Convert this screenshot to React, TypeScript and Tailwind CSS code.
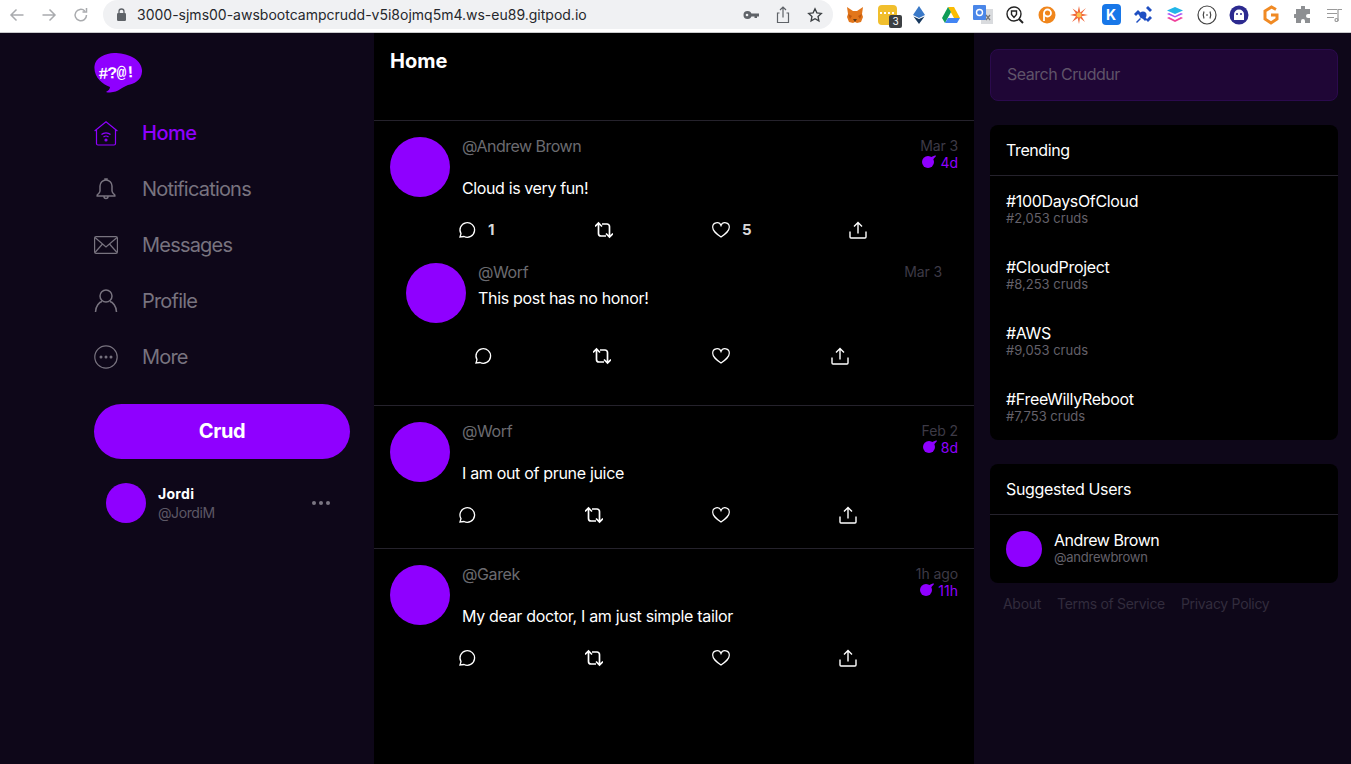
import React from "react";

const P = "#8f00ff";

function Back({ flip }: { flip?: boolean }) {
  return (
    <svg width="16" height="16" viewBox="0 0 16 16" fill="none" stroke="#a9abae" strokeWidth="1.5" style={flip ? { transform: "scaleX(-1)" } : undefined}>
      <path d="M14.5 8H2M7.5 2.5 2 8l5.5 5.5" />
    </svg>
  );
}

function Ext() {
  return (
    <div className="flex items-center">
      <div className="w-8 flex justify-center">
        <svg width="20" height="20" viewBox="0 0 20 20"><path d="M2 2l6 4h4l6-4-1 7 1 3-2 5-4 1-2-1-2 1-4-1-2-5 1-3z" fill="#e2761b" /><path d="M8 14h4l-2 3z" fill="#5b3a1c" /><path d="M3 9l4 2-2 3zM17 9l-4 2 2 3z" fill="#c0590f" /></svg>
      </div>
      <div className="w-8 flex justify-center relative">
        <div className="w-[19px] h-[20px] rounded-sm bg-[#f1bf2d] flex items-center justify-center gap-[2px] pb-1">
          <span className="w-[2px] h-[2px] bg-white" /><span className="w-[2px] h-[2px] bg-white" /><span className="w-[2px] h-[2px] bg-white" /><span className="w-[2px] h-[2px] bg-white" />
        </div>
        <span className="absolute left-[18px] top-[10px] w-[13px] h-[13px] rounded-[2px] bg-[#3c4043] text-white text-[10px] leading-[13px] text-center">3</span>
      </div>
      <div className="w-8 flex justify-center">
        <svg width="14" height="20" viewBox="0 0 14 20"><path d="M7 1 1 10l6 3 6-3z" fill="#3a79c8" /><path d="M7 14 1.5 11.5 7 19l5.500-7.500z" fill="#17395f" /></svg>
      </div>
      <div className="w-8 flex justify-center">
        <svg width="20" height="18" viewBox="0 0 20 18"><path d="M7 1h6l6 11h-6z" fill="#fbbc04" /><path d="M7 1 1 12l3 5 6-11z" fill="#0f9d58" /><path d="M4 17h12l3-5H7z" fill="#4285f4" /></svg>
      </div>
      <div className="w-8 flex justify-center">
        <svg width="20" height="21" viewBox="0 0 20 21"><rect x="8" y="5" width="12" height="15" fill="#d9dbde" /><rect x="0" y="1" width="13" height="15" rx="1" fill="#4a86e8" /><circle cx="6.500" cy="8.500" r="3" fill="none" stroke="#fff" strokeWidth="1.400" /><path d="m13 11 4 5M17 11l-4 5" stroke="#777" strokeWidth="1.300" /></svg>
      </div>
      <div className="w-8 flex justify-center">
        <svg width="20" height="20" viewBox="0 0 20 20" fill="none" stroke="#222" strokeWidth="1.400"><circle cx="9" cy="9" r="7" /><path d="m14 14 4 4" strokeWidth="2" /><path d="M6.500 6h5v3.500L9 12.500l-2.500-3z" /></svg>
      </div>
      <div className="w-8 flex justify-center">
        <svg width="18" height="20" viewBox="0 0 18 20"><circle cx="9" cy="10" r="8.500" fill="#f0861c" /><circle cx="9.500" cy="8" r="3.500" fill="none" stroke="#fff" strokeWidth="1.800" /><path d="M6 8v8" stroke="#fff" strokeWidth="1.800" /></svg>
      </div>
      <div className="w-8 flex justify-center">
        <svg width="20" height="20" viewBox="0 0 20 20"><path d="M10 1l1.300 6.500L17 3l-4.500 5.700L19 10l-6.500 1.300L16 17l-5-4-1 6-1.300-6L3 17l4-5.700L1 10l6-1.500L3.500 3.500 8.700 7z" fill="#f0673a" /><circle cx="10" cy="10" r="2.500" fill="#f9c04d" /></svg>
      </div>
      <div className="w-8 flex justify-center">
        <div className="w-[19px] h-[21px] rounded-[4px] bg-[#1877e8] text-white text-[14px] leading-[21px] font-bold text-center">K</div>
      </div>
      <div className="w-8 flex justify-center">
        <svg width="20" height="20" viewBox="0 0 20 20" fill="#1f4fc2"><path d="m6 6 8 8-2 2-8-8zM1 9l4-4 2 2-4 4zM13 15l4-4 2 2-4 4z" /><path d="m13 3 2-2 4 4-2 2zM3 17l4-4 1 1-4 4z" /><circle cx="10" cy="10" r="3.500" /></svg>
      </div>
      <div className="w-8 flex justify-center">
        <svg width="20" height="18" viewBox="0 0 20 18"><path d="m10 1 8 3.500-8 3.500-8-3.500z" fill="#21b6e8" /><path d="m2 8 8 3.500L18 8l-2-1-6 3-6-3z" fill="#a855f7" /><path d="m2 12 8 4 8-4-2-1-6 3-6-3z" fill="#f0419b" /></svg>
      </div>
      <div className="w-8 flex justify-center">
        <svg width="20" height="20" viewBox="0 0 20 20" fill="none" stroke="#444"><circle cx="10" cy="10" r="9" strokeWidth="1.200" /><path d="M7 6.500Q5.500 10 7 13.500M13 6.500q1.500 3.500 0 7M9 10h2" strokeWidth="1.200" /></svg>
      </div>
      <div className="w-8 flex justify-center">
        <svg width="20" height="20" viewBox="0 0 20 20"><circle cx="10" cy="10" r="9.500" fill="#2c2a8f" /><path d="M5 15V9.500a5 5 0 0 1 10 0V15z" fill="#fff" /><circle cx="8" cy="9" r="1" fill="#2c2a8f" /><circle cx="12" cy="9" r="1" fill="#2c2a8f" /></svg>
      </div>
      <div className="w-8 flex justify-center">
        <svg width="18" height="20" viewBox="0 0 18 20" fill="none" stroke="#f08a24" strokeWidth="3"><path d="M14 4.500 9.500 2 3 6v8l6 4 6-4v-4H9" /></svg>
      </div>
      <div className="w-8 flex justify-center">
        <svg width="18" height="18" viewBox="0 0 18 18" fill="#8d8f92"><path d="M7 1a2 2 0 0 1 4 0v2h5v5h-2a2 2 0 0 0 0 4h2v5H11v-2a2 2 0 0 0-4 0v2H2v-5H1a2 2 0 0 1 0-4h1V3h5z" /></svg>
      </div>
      <div className="w-8 flex justify-center">
        <svg width="16" height="14" viewBox="0 0 16 14" fill="none" stroke="#9a9a9a" strokeWidth="1.200"><path d="M0 1.500h10M0 5.500h10M0 9.500h7M11 13V1.500h4" /><circle cx="9.500" cy="12" r="1.500" /></svg>
      </div>
    </div>
  );
}

function ChromeBar() {
  return (
    <div className="h-[33px] shrink-0 bg-white border-b border-[#c9cacc] flex items-start relative font-['Inter',sans-serif]">
      <div className="w-[103px] h-[29px] flex items-center pl-[9px] gap-[16px]">
        <Back />
        <Back flip />
        <svg width="16" height="16" viewBox="0 0 16 16" fill="none" stroke="#a9abae" strokeWidth="1.500"><path d="M13.500 8a5.700 5.700 0 1 1-1.700-4M13.500 1v4h-4" /></svg>
      </div>
      <div className="w-[730px] h-[29px] bg-[#f0f1f3] rounded-r-full rounded-l-full flex items-center pl-[13px] pr-[9px]">
        <svg width="11" height="13" viewBox="0 0 11 13" fill="#5f6368"><rect x="1" y="5" width="9" height="8" rx="1.200" /><path d="M3 5V3.500a2.500 2.500 0 0 1 5 0V5" fill="none" stroke="#5f6368" strokeWidth="1.300" /></svg>
        <span className="ml-[10px] text-[14px] leading-[29px] text-[#26282c] whitespace-nowrap font-['Inter',sans-serif]">3000-sjms00-awsbootcampcrudd-v5i8ojmq5m4.ws-eu89.gitpod.io</span>
        <div className="ml-auto flex items-center gap-[14px]">
          <svg width="18" height="18" viewBox="0 0 18 18" fill="#5f6368"><circle cx="5.500" cy="9" r="4" /><path d="M8 7.500h9v3h-2v1.500h-2.500v-1.500H8z" /><circle cx="5" cy="9" r="1.300" fill="#f0f1f3" /></svg>
          <svg width="18" height="18" viewBox="0 0 18 18" fill="none" stroke="#5f6368" strokeWidth="1.200"><path d="M5.500 7H3.500v9.500h11V7h-2M9 11.500V1.500M6 4l3-3 3 3" /></svg>
          <svg width="16" height="16" viewBox="0 0 18 18" fill="none" stroke="#3c4043" strokeWidth="1.500" className="mx-px"><path d="m9 2 2.100 4.600 5 .6-3.700 3.400 1 5L9 13.100l-4.400 2.500 1-5L1.900 7.200l5-.6z" /></svg>
        </div>
      </div>
      <div className="ml-[6px] h-[29px] flex items-center"><Ext /></div>
    </div>
  );
}

function Logo() {
  return (
    <svg width="48" height="40" viewBox="0 0 48 40">
      <path d="M0.500 13C1 5 12 0 20 0c12 0 27 5 28 17 .5 10-8 14-14 15-6 2-9 7-18 7.500-2 0-3 0-4-.500 2-1 4-3 4-5C8 31-.5 24 .5 13Z" fill={P} />
      <text x="4.500" y="25" fontSize="16.500" fontWeight="700" fill="#fff" fontFamily="'Liberation Mono', monospace" letterSpacing="-0.900" transform="rotate(-3 24 20)">#?@!</text>
    </svg>
  );
}

const NAV_G = "fill-none stroke-current";

function HomeIcon() {
  return (
    <svg width="24" height="25" viewBox="0 0 24 25" className={NAV_G} strokeWidth="1.200">
      <path d="M.6 10 12 .8 23.400 10M2.500 8.500v14a1.500 1.500 0 0 0 1.500 1.500h16a1.500 1.500 0 0 0 1.500-1.500v-14" />
      <path d="M7.500 13.500c2.500-2.300 6.500-2.300 9 0M9.500 16c1.500-1.200 3.500-1.200 5 0" />
      <circle cx="12" cy="19" r="1" fill="currentColor" />
    </svg>
  );
}
function BellIcon() {
  return (
    <svg width="20" height="22" viewBox="0 0 20 22" className={NAV_G} strokeWidth="1.500">
      <path d="M4 13V8a6 6 0 0 1 12 0v5c0 1.500 1 2.500 2.800 4v1H1.200v-1C3 15.500 4 14.500 4 13ZM8 18.500q0 2 2 2t2-2M9 2V1h2v1" />
    </svg>
  );
}
function MailIcon() {
  return (
    <svg width="24" height="18" viewBox="0 0 24 18" className={NAV_G} strokeWidth="1.200">
      <rect x=".6" y=".6" width="22.800" height="16.800" rx="1.500" />
      <path d="m1 1.500 11 9.500 11-9.500M1 16.500l7.500-8.500M23 16.500 15.500 8" />
    </svg>
  );
}
function UserIcon() {
  return (
    <svg width="24" height="24" viewBox="0 0 24 24" className={NAV_G} strokeWidth="1.500">
      <circle cx="12" cy="7" r="6" />
      <path d="M1.500 23c0-6 4-10 6.500-10.500M22.500 23c0-6-4-10-6.500-10.500" />
    </svg>
  );
}
function MoreIcon() {
  return (
    <svg width="24" height="24" viewBox="0 0 24 24" className={NAV_G} strokeWidth="1.200">
      <circle cx="12" cy="12" r="11.200" />
      <circle cx="7" cy="12" r=".9" fill="currentColor" /><circle cx="12" cy="12" r=".9" fill="currentColor" /><circle cx="17" cy="12" r=".9" fill="currentColor" />
    </svg>
  );
}

function NavItem({ icon, label, active }: { icon: React.ReactNode; label: string; active?: boolean }) {
  return (
    <div className={active ? "h-14 flex items-center gap-6 text-[#8f00ff] font-medium tracking-[-0.5px]" : "h-14 flex items-center gap-6 text-[#78737f] tracking-[-0.8px]"}>
      <div className="w-6 flex justify-center">{icon}</div>
      <span className="text-[20px]">{label}</span>
    </div>
  );
}

function Sidebar() {
  return (
    <div className="w-[374px] shrink-0 pl-[94px] pr-[24px] pt-[20px]">
      <div className="h-[52px]"><Logo /></div>
      <NavItem active icon={<HomeIcon />} label="Home" />
      <NavItem icon={<BellIcon />} label="Notifications" />
      <NavItem icon={<MailIcon />} label="Messages" />
      <NavItem icon={<UserIcon />} label="Profile" />
      <NavItem icon={<MoreIcon />} label="More" />
      <div className="mt-[19px] h-[55px] rounded-full bg-[#8f00ff] text-white text-[20px] font-bold tracking-[-0.4px] flex items-center justify-center pb-[1px]">Crud</div>
      <div className="mt-[24px] pl-[12px] pr-[20px] flex items-center">
        <div className="w-10 h-10 rounded-full bg-[#8f00ff]" />
        <div className="ml-3">
          <div className="text-[14px] leading-[20px] font-bold text-white tracking-[0.3px]">Jordi</div>
          <div className="text-[14px] leading-[18px] text-[#5d5866] tracking-[-0.4px]">@JordiM</div>
        </div>
        <div className="ml-auto flex gap-[3px]">
          <span className="w-1 h-1 rounded-full bg-[#7a7582]" /><span className="w-1 h-1 rounded-full bg-[#7a7582]" /><span className="w-1 h-1 rounded-full bg-[#7a7582]" />
        </div>
      </div>
    </div>
  );
}

function ReplyI() {
  return <svg width="18" height="18" viewBox="0 0 18 18" fill="none" stroke="#fff" strokeWidth="1.300"><path d="M2 16l1-3.300A7.300 7.300 0 1 1 6 15.500z" /></svg>;
}
function RetweetI() {
  return <svg width="18" height="18" viewBox="0 0 18 18" fill="none" stroke="#fff" strokeWidth="1.700"><path d="M0 5.500 3.500 2l3.500 3.500M3.500 3v9.500a2.500 2.500 0 0 0 2.500 2.500h5M18 12.500 14.500 16 11 12.500M14.500 15V5.500A2.500 2.500 0 0 0 12 3H7" /></svg>;
}
function HeartI() {
  return <svg width="18" height="18" viewBox="0 0 18 18" fill="none" stroke="#fff" strokeWidth="1.200"><path d="M9 16C4 12.500.7 10 .7 6.300A4.300 4.300 0 0 1 9 4.500a4.300 4.300 0 0 1 8.300 1.800C17.300 10 14 12.500 9 16Z" /></svg>;
}
function ShareI() {
  return <svg width="18" height="18" viewBox="0 0 18 18" fill="none" stroke="#fff" strokeWidth="1.400"><path d="M9 12.500V2M5 5.500 9 1.500l4 4M1 10.500V16a1 1 0 0 0 1 1h14a1 1 0 0 0 1-1v-5.500" /></svg>;
}

function Bomb() {
  return (
    <svg width="14" height="13" viewBox="0 0 14 13" fill={P} className="-mt-[3px]">
      <circle cx="6" cy="7" r="6" />
      <path d="M8 2.500 13.500.3l.4 1L11 4.500z" />
    </svg>
  );
}

function Actions({ gap, reply, like }: { gap: string; reply?: string; like?: string }) {
  return (
    <div className={`flex items-center ${gap}`}>
      <div className="flex items-center">
        <ReplyI />
        {reply && <span className="ml-3 text-[15px] font-bold text-[#d8d8d8] w-2">{reply}</span>}
      </div>
      <RetweetI />
      <div className="flex items-center">
        <HeartI />
        {like && <span className="ml-3 text-[15px] font-bold text-[#d8d8d8] w-2">{like}</span>}
      </div>
      <ShareI />
    </div>
  );
}

function Post({ name, date, ago, text, gap, reply, like, h }: { name: string; date: string; ago: string; text: string; gap: string; reply?: string; like?: string; h: string }) {
  return (
    <div className={`${h} border-b border-[#25222c] pt-[16px] pl-[16px] pr-[16px]`}>
      <div className="flex">
        <div className="w-[60px] h-[60px] rounded-full bg-[#8f00ff] shrink-0" />
        <div className="ml-3 flex-1 flex justify-between">
          <div>
            <div className="text-[16px] leading-[18px] text-[#6b6b70] tracking-[-0.4px]">{name}</div>
            <div className="mt-[24px] text-[16px] leading-[18px] text-white tracking-[-0.32px]">{text}</div>
          </div>
          <div className="flex flex-col items-end">
            <div className="text-[14px] leading-[18px] text-[#3d3a46] tracking-[-0.1px]">{date}</div>
            <div className="mt-px flex items-center gap-[4px] text-[14px] leading-[14px] text-[#8f00ff]"><Bomb />{ago}</div>
          </div>
        </div>
      </div>
      <div className="ml-[68px] -mt-[2px] pt-[26px]">
        <Actions gap={gap} reply={reply} like={like} />
      </div>
    </div>
  );
}

function Main() {
  return (
    <div className="w-[600px] shrink-0 bg-black">
      <div className="h-[88px] border-b border-[#25222c] pl-4 pt-[16px] text-[20px] leading-[24px] font-bold text-white">Home</div>
      <div className="h-[285px] border-b border-[#25222c] pt-[16px] pl-[16px] pr-[16px]">
        <div className="flex">
          <div className="w-[60px] h-[60px] rounded-full bg-[#8f00ff] shrink-0" />
          <div className="ml-3 flex-1 flex justify-between">
            <div>
              <div className="text-[16px] leading-[18px] text-[#6b6b70] tracking-[-0.5px]">@Andrew Brown</div>
              <div className="mt-[24px] text-[16px] leading-[18px] text-white tracking-[-0.38px]">Cloud is very fun!</div>
            </div>
            <div className="flex flex-col items-end">
              <div className="text-[14px] leading-[18px] text-[#3d3a46] tracking-[-0.1px]">Mar 3</div>
              <div className="mt-px flex items-center gap-[4px] text-[14px] leading-[14px] text-[#8f00ff]"><Bomb />4d</div>
            </div>
          </div>
        </div>
        <div className="ml-[68px] pt-[22px]"><Actions gap="gap-[99px]" reply="1" like="5" /></div>
        <div className="mt-[21px] ml-4 pr-4 flex">
          <div className="w-[60px] h-[60px] rounded-full bg-[#8f00ff] shrink-0" />
          <div className="ml-3 flex-1">
            <div className="flex justify-between">
              <div className="text-[16px] leading-[18px] text-[#6b6b70] tracking-[-0.4px]">@Worf</div>
              <div className="text-[14px] leading-[18px] text-[#3d3a46] tracking-[-0.1px]">Mar 3</div>
            </div>
            <div className="mt-[8px] text-[16px] leading-[18px] text-white tracking-[-0.32px]">This post has no honor!</div>
          </div>
        </div>
        <div className="ml-[84px] pt-[24px]"><Actions gap="gap-[101px]" /></div>
      </div>
      <Post h="h-[143px]" name="@Worf" date="Feb 2" ago="8d" text="I am out of prune juice" gap="gap-[109px]" />
      <Post h="h-[143px] border-b-0" name="@Garek" date="1h ago" ago="11h" text="My dear doctor, I am just simple tailor" gap="gap-[109px]" />
    </div>
  );
}

function Trend({ tag, n }: { tag: string; n: string }) {
  return (
    <div className="h-[66px] pl-4 pt-[16px]">
      <div className="text-[16px] leading-[18px] text-white tracking-[-0.33px]">{tag}</div>
      <div className="text-[13px] leading-[16px] text-[#64616a]">{n}</div>
    </div>
  );
}

function Right() {
  return (
    <div className="w-[348px] ml-4 pt-[16px]">
      <div className="h-[52px] rounded-lg bg-[#1f0636] border border-[#2b0a4d] pl-4 pb-[2px] flex items-center text-[16px] text-[#5f5469] tracking-[-0.5px]">Search Cruddur</div>
      <div className="mt-[24px] rounded-lg bg-black">
        <div className="h-[51px] pl-4 flex items-center text-[16px] text-white border-b border-[#25222c] tracking-[-0.4px]">Trending</div>
        <div className="h-[264px]">
          <Trend tag="#100DaysOfCloud" n="#2,053 cruds" />
          <Trend tag="#CloudProject" n="#8,253 cruds" />
          <Trend tag="#AWS" n="#9,053 cruds" />
          <Trend tag="#FreeWillyReboot" n="#7,753 cruds" />
        </div>
      </div>
      <div className="mt-[24px] rounded-lg bg-black">
        <div className="h-[51px] pl-4 flex items-center text-[16px] text-white border-b border-[#25222c] tracking-[-0.33px]">Suggested Users</div>
        <div className="h-[68px] pl-4 flex items-center">
          <div className="w-9 h-9 rounded-full bg-[#8f00ff]" />
          <div className="ml-3 pb-[2px]">
            <div className="text-[16px] leading-[18px] text-white tracking-[-0.45px]">Andrew Brown</div>
            <div className="text-[13px] leading-[16px] text-[#64616a] tracking-[-0.25px]">@andrewbrown</div>
          </div>
        </div>
      </div>
      <div className="mt-[12px] pl-[13px] flex gap-4 text-[14px] leading-[18px] text-[#322c3d] tracking-[-0.3px]">
        <span>About</span><span>Terms of Service</span><span>Privacy Policy</span>
      </div>
    </div>
  );
}

export default function App() {
  return (
    <div className="w-[1351px] h-[764px] overflow-hidden flex flex-col bg-[#0e0719] font-['Inter',sans-serif]">
      <ChromeBar />
      <div className="flex flex-1 min-h-0">
        <Sidebar />
        <Main />
        <Right />
      </div>
    </div>
  );
}
